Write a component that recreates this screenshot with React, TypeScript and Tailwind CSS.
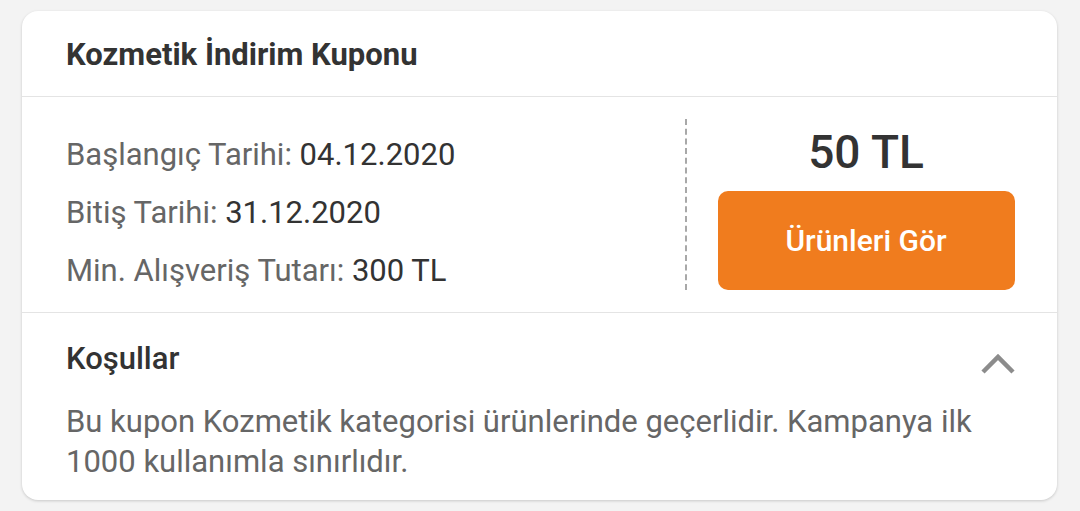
import React from "react";

export default function App() {
  return (
    <div
      className="w-[1080px] h-[511px] bg-[#f3f3f3] pt-[11px] pl-[22px] pr-[23px]"
      style={{ fontFamily: "Roboto, 'Noto Sans', sans-serif" }}
    >
      <div className="bg-white rounded-[16px] shadow-[0_1px_3px_rgba(0,0,0,0.18)] h-[489px] flex flex-col">
        <div className="h-[86px] flex items-center pl-[44px] border-b border-[#e4e4e4]">
          <span className="text-[31px] leading-[40px] font-bold text-[#333333] mt-[2px]">Kozmetik İndirim Kuponu</span>
        </div>
        <div className="h-[216px] flex border-b border-[#e4e4e4]">
          <div className="flex-1 pl-[44px] pt-[29px] text-[31px] leading-[58px] text-[#666666]">
            <div>
              Başlangıç Tarihi: <span className="text-[#333333]">04.12.2020</span>
            </div>
            <div>
              Bitiş Tarihi: <span className="text-[#333333]">31.12.2020</span>
            </div>
            <div>
              Min. Alışveriş Tutarı: <span className="text-[#333333]">300 TL</span>
            </div>
          </div>
          <div className="py-[22px] flex">
            <div className="border-l-2 border-dashed border-[#a8a8a8]" />
          </div>
          <div className="w-[370px] pl-[30px] pr-[42px] flex flex-col items-center pt-[28px]">
            <div className="text-[46px] leading-[54px] font-medium text-[#333333]">50 TL</div>
            <button className="mt-[12px] w-[297px] h-[99px] rounded-[10px] bg-[#f07c1e] text-white text-[30px] font-medium">
              Ürünleri Gör
            </button>
          </div>
        </div>
        <div className="flex-1 pl-[44px] pr-[42px]">
          <div className="flex items-center justify-between pt-[28px]">
            <span className="text-[31px] font-medium text-[#333333] leading-[36px]">Koşullar</span>
            <svg width="34" height="22" viewBox="0 0 34 22" className="mt-[10px]">
              <path d="M2 19 L17 4 L32 19" fill="none" stroke="#8c8c8c" strokeWidth="4.5" />
            </svg>
          </div>
          <p className="mt-[25px] text-[31px] leading-[40px] text-[#666666]">
            Bu kupon Kozmetik kategorisi ürünlerinde geçerlidir. Kampanya ilk 1000 kullanımla sınırlıdır.
          </p>
        </div>
      </div>
    </div>
  );
}
